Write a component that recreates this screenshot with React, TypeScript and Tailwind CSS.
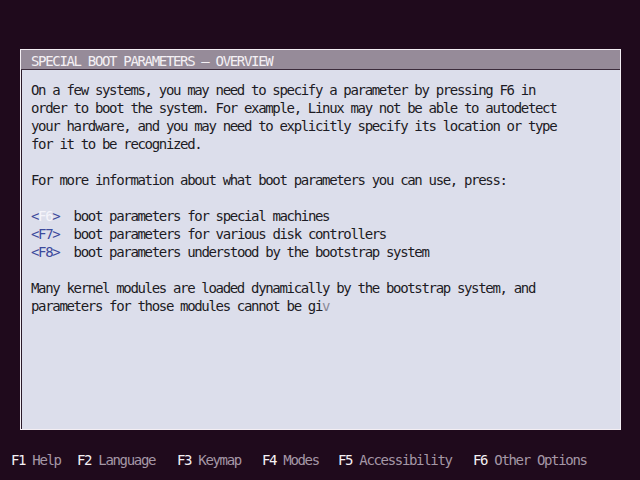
import React from "react"

const mono = "font-['DejaVu_Sans_Mono','Liberation_Mono',monospace] text-[14px] tracking-[-1.33px] leading-[18px] whitespace-pre"

const keys = [
  { k: "F1", label: "Help", w: "w-[66px]" },
  { k: "F2", label: "Language", w: "w-[100px]" },
  { k: "F3", label: "Keymap", w: "w-[85px]" },
  { k: "F4", label: "Modes", w: "w-[76px]" },
  { k: "F5", label: "Accessibility", w: "w-[135px]" },
  { k: "F6", label: "Other Options", w: "w-[130px]" },
]

function KeyLine({ k, text, active }: { k: string; text: string; active?: boolean }) {
  return (
    <div>
      <span className="text-[#3d4a9c]">&lt;</span>
      <span className={active ? "text-[#f4f4fa]" : "text-[#3d4a9c]"}>{k}</span>
      <span className="text-[#3d4a9c]">&gt;</span>
      {"  " + text}
    </div>
  )
}

export default function App() {
  return (
    <div className={`w-[640px] h-[480px] bg-[#1f0a1c] flex flex-col overflow-hidden ${mono}`}>
      <div className="mt-[49px] ml-[20px] w-[601px] h-[381px] border border-[#f3eef3] flex flex-col">
        <div className="h-[20px] bg-[#968b99] text-[#f4f0f4] pl-[10px] pt-[2px] border-b border-[#3b2b3b]">
          SPECIAL BOOT PARAMETERS – OVERVIEW
        </div>
        <div className="flex-1 bg-[#dcdeeb] border-l border-[#2a1a2a] text-[#1c1b24] pl-[9px] pt-[11px]">
          <div>On a few systems, you may need to specify a parameter by pressing F6 in</div>
          <div>order to boot the system. For example, Linux may not be able to autodetect</div>
          <div>your hardware, and you may need to explicitly specify its location or type</div>
          <div>for it to be recognized.</div>
          <div>&nbsp;</div>
          <div>For more information about what boot parameters you can use, press:</div>
          <div>&nbsp;</div>
          <KeyLine k="F6" text="boot parameters for special machines" active />
          <KeyLine k="F7" text="boot parameters for various disk controllers" />
          <KeyLine k="F8" text="boot parameters understood by the bootstrap system" />
          <div>&nbsp;</div>
          <div>Many kernel modules are loaded dynamically by the bootstrap system, and</div>
          <div>
            parameters for those modules cannot be gi<span className="text-[#8a8a98]">v</span>
          </div>
        </div>
      </div>
      <div className="flex ml-[11px] mt-[21px]">
        {keys.map((it) => (
          <div key={it.k} className={it.w}>
            <span className="text-[#f4f0f4]">{it.k}</span>
            <span className="text-[#a597a6]"> {it.label}</span>
          </div>
        ))}
      </div>
    </div>
  )
}
